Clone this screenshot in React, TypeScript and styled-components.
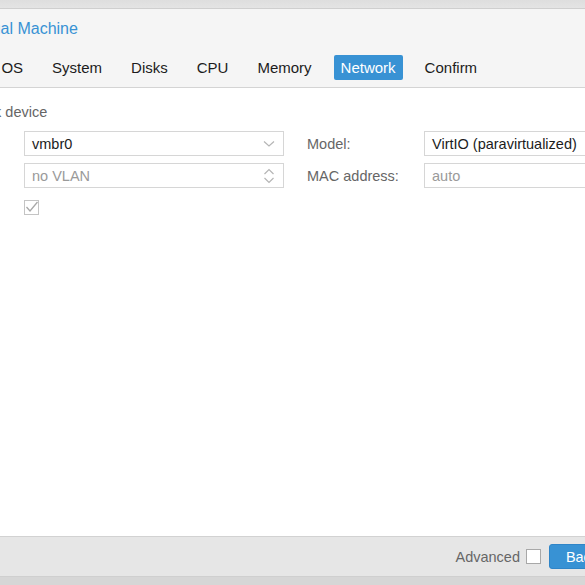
import React from 'react'
import styled, { createGlobalStyle } from 'styled-components'

const GlobalStyle = createGlobalStyle`
  html, body {
    margin: 0;
    padding: 0;
    background: #d9d9d9;
    font-family: 'Liberation Sans', Arial, sans-serif;
    overflow: hidden;
  }
`

const Viewport = styled.div`
  width: 585px;
  height: 585px;
  overflow: hidden;
  background: linear-gradient(#dedede, #e4e4e4 8px, #d6d6d6 8px);
`

const Dialog = styled.div`
  margin: 8px 0 0 -103px;
  width: 803px;
  height: 569px;
  display: flex;
  flex-direction: column;
  background: #f5f5f5;
  border: 1px solid #cfcfcf;
  box-sizing: border-box;
`

const Header = styled.div`
  height: 39px;
  display: flex;
  align-items: center;
  padding: 0 13px;
  font-size: 16px;
  color: #3892d4;
`

const TabBar = styled.div`
  height: 39px;
  display: flex;
  align-items: center;
  gap: 15px;
  padding: 0 0 0 14px;
  border-bottom: 1px solid #d4d4d4;
`

const Tab = styled.div<{ $active?: boolean }>`
  padding: 4px 7px;
  height: 17px;
  line-height: 17px;
  font-size: 15px;
  border-radius: 2px;
  color: ${p => (p.$active ? '#fff' : '#1c1c1c')};
  background: ${p => (p.$active ? '#3892d4' : 'transparent')};
`

const Body = styled.div`
  flex: 1;
  background: #fff;
  padding: 14px 9px;
`

const TopRow = styled.div`
  height: 20px;
  display: flex;
  align-items: center;
  gap: 6px;
  font-size: 14.5px;
  color: #666;
`

const Form = styled.div`
  margin-top: 9px;
  display: grid;
  grid-template-columns: 377px 377px;
  column-gap: 23px;
`

const Column = styled.div`
  display: flex;
  flex-direction: column;
  gap: 7px;
`

const Row = styled.div`
  height: 25px;
  display: flex;
  align-items: center;
`

const Label = styled.div`
  width: 117px;
  font-size: 14.5px;
  color: #666;
`

const Field = styled.div<{ $muted?: boolean }>`
  width: 260px;
  height: 25px;
  box-sizing: border-box;
  border: 1px solid #d6d6d6;
  display: flex;
  align-items: center;
  justify-content: space-between;
  padding: 0 8px 0 7px;
  font-size: 14.5px;
  color: ${p => (p.$muted ? '#9a9a9a' : '#1c1c1c')};
`

const Box = styled.div<{ $disabled?: boolean }>`
  width: 15px;
  height: 15px;
  box-sizing: border-box;
  border: 1px solid ${p => (p.$disabled ? '#c4c4c4' : '#a8a8a8')};
  background: #fff;
  display: flex;
  align-items: center;
  justify-content: center;
`

const Footer = styled.div`
  height: 39px;
  background: #e6e6e6;
  border-top: 1px solid #d2d2d2;
  display: flex;
  align-items: center;
  justify-content: flex-end;
  padding: 0 12px;
  gap: 6px;
  font-size: 14.5px;
  color: #666;
`

const AdvancedLabel = styled.label`
  display: flex;
  align-items: center;
  gap: 6px;
  margin-right: 2px;
`

const Button = styled.button`
  height: 25px;
  min-width: 66px;
  padding: 0 12px;
  border: 1px solid #2f85c8;
  border-radius: 3px;
  background: #3892d4;
  color: #fff;
  font-family: inherit;
  font-size: 14.5px;
`

const ChevronDown = () => (
  <svg width="12" height="8" viewBox="0 0 12 8">
    <path d="M1 1.5 L6 6 L11 1.5" fill="none" stroke="#b5b5b5" strokeWidth="1.2" />
  </svg>
)

const Spinner = () => (
  <svg width="12" height="18" viewBox="0 0 12 18">
    <path d="M1.5 7 L6 2.5 L10.5 7" fill="none" stroke="#b5b5b5" strokeWidth="1.2" />
    <path d="M1.5 11 L6 15.5 L10.5 11" fill="none" stroke="#b5b5b5" strokeWidth="1.2" />
  </svg>
)

const Check = () => (
  <svg width="13" height="13" viewBox="0 0 13 13">
    <path d="M1.5 6 L5 10 L12.5 1" fill="none" stroke="#a8a8a8" strokeWidth="1.3" />
  </svg>
)

const tabs = ['General', 'OS', 'System', 'Disks', 'CPU', 'Memory', 'Network', 'Confirm']

export default function App() {
  return (
    <Viewport>
      <GlobalStyle />
      <Dialog>
        <Header>Create: Virtual Machine</Header>
        <TabBar>
          {tabs.map(t => (
            <Tab key={t} $active={t === 'Network'}>
              {t}
            </Tab>
          ))}
        </TabBar>
        <Body>
          <TopRow>
            <Box />
            No network device
          </TopRow>
          <Form>
            <Column>
              <Row>
                <Label>Bridge:</Label>
                <Field>
                  vmbr0
                  <ChevronDown />
                </Field>
              </Row>
              <Row>
                <Label>VLAN Tag:</Label>
                <Field $muted>
                  no VLAN
                  <Spinner />
                </Field>
              </Row>
              <Row>
                <Label>Firewall:</Label>
                <Box $disabled>
                  <Check />
                </Box>
              </Row>
            </Column>
            <Column>
              <Row>
                <Label>Model:</Label>
                <Field>
                  VirtIO (paravirtualized)
                  <ChevronDown />
                </Field>
              </Row>
              <Row>
                <Label>MAC address:</Label>
                <Field $muted>auto</Field>
              </Row>
            </Column>
          </Form>
        </Body>
        <Footer>
          <AdvancedLabel>
            Advanced
            <Box />
          </AdvancedLabel>
          <Button>Back</Button>
          <Button>Next</Button>
        </Footer>
      </Dialog>
    </Viewport>
  )
}
